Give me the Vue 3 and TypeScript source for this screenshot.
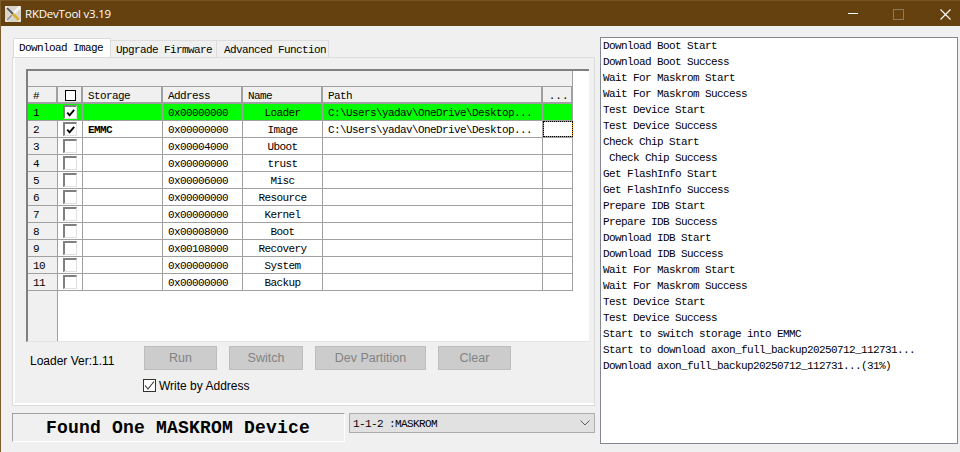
<script setup lang="ts">
interface Row { n: number; on: boolean; storage: string; addr: string; name: string; path: string }
const p = 'C:\\Users\\yadav\\OneDrive\\Desktop...'
const rows: Row[] = [
  { n: 1, on: true, storage: '', addr: '0x00000000', name: 'Loader', path: p },
  { n: 2, on: true, storage: 'EMMC', addr: '0x00000000', name: 'Image', path: p },
  { n: 3, on: false, storage: '', addr: '0x00004000', name: 'Uboot', path: '' },
  { n: 4, on: false, storage: '', addr: '0x00000000', name: 'trust', path: '' },
  { n: 5, on: false, storage: '', addr: '0x00006000', name: 'Misc', path: '' },
  { n: 6, on: false, storage: '', addr: '0x00000000', name: 'Resource', path: '' },
  { n: 7, on: false, storage: '', addr: '0x00000000', name: 'Kernel', path: '' },
  { n: 8, on: false, storage: '', addr: '0x00008000', name: 'Boot', path: '' },
  { n: 9, on: false, storage: '', addr: '0x00108000', name: 'Recovery', path: '' },
  { n: 10, on: false, storage: '', addr: '0x00000000', name: 'System', path: '' },
  { n: 11, on: false, storage: '', addr: '0x00000000', name: 'Backup', path: '' },
]
const log: string[] = [
  'Download Boot Start', 'Download Boot Success', 'Wait For Maskrom Start', 'Wait For Maskrom Success',
  'Test Device Start', 'Test Device Success', 'Check Chip Start', ' Check Chip Success',
  'Get FlashInfo Start', 'Get FlashInfo Success', 'Prepare IDB Start', 'Prepare IDB Success',
  'Download IDB Start', 'Download IDB Success', 'Wait For Maskrom Start', 'Wait For Maskrom Success',
  'Test Device Start', 'Test Device Success', 'Start to switch storage into EMMC',
  'Start to download axon_full_backup20250712_112731...',
  'Download axon_full_backup20250712_112731...(31%)',
]
const buttons = [
  { label: 'Run', w: 73 }, { label: 'Switch', w: 74 }, { label: 'Dev Partition', w: 111 }, { label: 'Clear', w: 73 },
]
</script>

<template>
  <div class="window">
    <header class="titlebar">
      <svg class="appicon" width="16" height="16" viewBox="0 0 16 16">
        <rect width="16" height="16" fill="#d8d4cc" />
        <path d="M1 15 L15 1 M1 1 L15 15" stroke="#f4f4f4" stroke-width="3" />
        <path d="M2 14 L7 9" stroke="#9a9a9a" stroke-width="2" />
        <path d="M2 2 L8 8" stroke="#555" stroke-width="2" />
        <path d="M8 8 L14 14" stroke="#d8b030" stroke-width="3" />
      </svg>
      <span class="title">RKDevTool v3.19</span>
      <span class="min"></span>
      <span class="max"></span>
      <svg class="close" width="11" height="11" viewBox="0 0 11 11">
        <path d="M0.5 0.5 L10.5 10.5 M10.5 0.5 L0.5 10.5" stroke="#fff" stroke-width="1.1" />
      </svg>
    </header>

    <main class="content">
      <section class="left">
        <nav class="tabs">
          <div class="tab active">Download Image</div>
          <div class="tab t2">Upgrade Firmware</div>
          <div class="tab t3">Advanced Function</div>
        </nav>
        <div class="panel">
          <div class="grid">
            <div class="strip"></div>
            <div class="head">
              <div class="h numh">#</div>
              <div class="h chk"><span class="hbox"></span></div>
              <div class="h pad">Storage</div>
              <div class="h pad">Address</div>
              <div class="h pad">Name</div>
              <div class="h pad">Path</div>
              <div class="h dots">. . .</div>
            </div>
            <div class="body">
              <div class="nums">
                <div v-for="r in rows" :key="r.n" class="num" :class="{ green: r.n === 1 }">{{ r.n }}</div>
              </div>
              <div class="cells">
                <div v-for="r in rows" :key="r.n" class="row" :class="{ green: r.n === 1 }">
                  <div class="c chk">
                    <span class="box">
                      <svg v-if="r.on" width="12" height="12" viewBox="0 0 12 12">
                        <path d="M2.5 5.5 L5 8.5 L10 2.5" fill="none" stroke="#000" stroke-width="2" />
                      </svg>
                    </span>
                  </div>
                  <div class="c pad storage">{{ r.storage }}</div>
                  <div class="c pad">{{ r.addr }}</div>
                  <div class="c mid">{{ r.name }}</div>
                  <div class="c pad">{{ r.path }}</div>
                  <div class="c last" :class="{ focus: r.n === 2 }"></div>
                </div>
              </div>
            </div>
          </div>

          <div class="controls">
            <span class="loader">Loader Ver:1.11</span>
            <div class="btns">
              <button v-for="b in buttons" :key="b.label" class="btn" :style="{ width: b.w + 'px' }" disabled>{{ b.label }}</button>
            </div>
          </div>
          <label class="wba">
            <span class="wbox">
              <svg width="11" height="11" viewBox="0 0 11 11">
                <path d="M1 5.5 L4 9 L10 1.5" fill="none" stroke="#333" stroke-width="1.1" />
              </svg>
            </span>
            <span>Write by Address</span>
          </label>
        </div>

        <div class="bottom">
          <div class="status">Found One MASKROM Device</div>
          <div class="combo">
            <span class="ctext">1-1-2 :MASKROM</span>
            <svg width="10" height="6" viewBox="0 0 10 6">
              <path d="M0.5 0.5 L5 5 L9.5 0.5" fill="none" stroke="#606060" stroke-width="1" />
            </svg>
          </div>
        </div>
      </section>

      <section class="log">
        <div v-for="(l, i) in log" :key="i" class="line">{{ l }}</div>
      </section>
    </main>
  </div>
</template>

<style>
html, body { margin: 0; background: #f0f0f0; overflow: hidden; }
</style>

<style scoped>
.window {
  width: 960px;
  height: 452px;
  box-sizing: border-box;
  border-left: 1px solid #7d5c30;
  background: #f0f0f0;
  display: flex;
  flex-direction: column;
  font-family: "Liberation Mono", monospace;
  font-size: 11px;
  letter-spacing: -0.6px;
  color: #000;
  overflow: hidden;
}
.titlebar {
  height: 26px;
  flex: none;
  box-sizing: border-box;
  background: #65410f;
  border-top: 1px solid #755526;
  display: flex;
  align-items: center;
  padding: 0 9px 0 4px;
  color: #fff;
  letter-spacing: 0;
}
.appicon { flex: none; margin-top: 1px; }
.title {
  flex: 1;
  margin-left: 4px;
  margin-bottom: 1px;
  font-family: "Open Sans", sans-serif;
  font-size: 11.5px;
  letter-spacing: -0.22px;
  white-space: nowrap;
}
.min { width: 10px; height: 1px; background: #fff; }
.max { width: 9px; height: 9px; border: 1px solid #8f7a58; margin-left: 35px; margin-top: 1px; }
.close { margin-left: 36px; margin-top: 1px; }

.content { flex: 1; display: flex; min-height: 0; padding-left: 11px; }
.left { width: 583px; flex: none; padding-top: 12px; display: flex; flex-direction: column; }
.tabs { display: flex; align-items: flex-end; height: 19px; margin-left: 1px; }
.tab {
  box-sizing: border-box;
  height: 17px;
  line-height: 18px;
  padding-left: 5px;
  border: 1px solid #dcdcdc;
  border-bottom: none;
  border-left: none;
  background: #f0f0f0;
  white-space: nowrap;
}
.active {
  width: 98px;
  height: 19px;
  line-height: 18px;
  background: #fff;
  border-left: 1px solid #dcdcdc;
}
.t2 { width: 106px; }
.t3 { width: 112px; padding-left: 7px; }
.panel {
  box-sizing: border-box;
  height: 349px;
  padding: 11px 0 0 13px;
  border: 1px solid #dcdcdc;
  box-shadow: inset 2px 0 0 #fff, inset 0 -2px 0 #fff;
  background: #f0f0f0;
}
.grid {
  box-sizing: border-box;
  width: 563px;
  height: 273px;
  border-top: 2px solid #808080;
  border-left: 2px solid #808080;
  border-bottom: 1px solid #e4e4e4;
  background: #fff;
  display: flex;
  flex-direction: column;
}
.strip {
  box-sizing: border-box;
  width: 545px;
  height: 16px;
  flex: none;
  background: #f0f0f0;
  border-right: 1px solid #a0a0a0;
  border-bottom: 1px solid #a0a0a0;
}
.head {
  box-sizing: border-box;
  width: 545px;
  height: 17px;
  flex: none;
  display: grid;
  grid-template-columns: 30px 25px 80px 80px 80px 220px 30px;
  background: #f0f0f0;
  border-bottom: 2px solid #a0a0a0;
}
.h { box-sizing: border-box; border-right: 2px solid #a0a0a0; line-height: 18px; white-space: pre; }
.numh { padding-left: 5px; }
.pad { padding-left: 5px; }
.hbox { display: block; width: 9px; height: 9px; border: 1px solid #000; background: #fff; margin: 3px 0 0 7px; }
.dots { text-align: center; letter-spacing: -3.3px; }
.body { flex: 1; display: flex; min-height: 0; }
.nums { box-sizing: border-box; width: 30px; flex: none; background: #f0f0f0; border-right: 1px solid #a0a0a0; }
.num {
  box-sizing: border-box;
  height: 17px;
  line-height: 18px;
  padding-left: 5px;
  border-bottom: 1px solid #a0a0a0;
}
.num.green { background: #00ff00; }
.cells { flex: none; width: 515px; }
.row {
  height: 17px;
  box-sizing: border-box;
  display: grid;
  grid-template-columns: 25px 80px 80px 80px 220px 30px;
  border-bottom: 1px solid #a0a0a0;
}
.row.green { background: #00ff00; }
.c { box-sizing: border-box; border-right: 1px solid #a0a0a0; line-height: 18px; white-space: pre; overflow: hidden; min-width: 0; }
.mid { text-align: center; }
.storage { font-weight: bold; }
.c.chk { display: flex; justify-content: center; align-items: center; }
.box {
  box-sizing: border-box;
  width: 14px;
  height: 14px;
  background: #fff;
  border-top: 2px solid #808080;
  border-left: 2px solid #808080;
  border-right: 1px solid #e0e0e0;
  border-bottom: 1px solid #e0e0e0;
  display: flex;
  align-items: center;
  justify-content: center;
}
.focus {
  border: 1px dotted #000;
  background: linear-gradient(#fff, #fff) padding-box, #e8870f border-box;
}

.controls { display: flex; margin-top: 4px; height: 24px; }
.loader {
  width: 118px;
  padding-left: 4px;
  box-sizing: border-box;
  font-family: "Liberation Sans", sans-serif;
  font-size: 12px;
  letter-spacing: 0;
  line-height: 30px;
  white-space: nowrap;
}
.btns { display: flex; gap: 12px; }
.btn {
  box-sizing: border-box;
  height: 24px;
  padding: 0;
  background: #cccccc;
  border: 1px solid #bdbdbd;
  color: #838383;
  font-family: "Liberation Sans", sans-serif;
  font-size: 12.5px;
  letter-spacing: 0;
}
.wba {
  display: flex;
  align-items: center;
  gap: 3px;
  margin: 9px 0 0 117px;
  height: 13px;
  font-family: "Liberation Sans", sans-serif;
  font-size: 12px;
  letter-spacing: 0;
}
.wbox {
  box-sizing: border-box;
  width: 13px;
  height: 13px;
  border: 1px solid #333;
  background: #fff;
  display: flex;
  align-items: center;
  justify-content: center;
}
.bottom { display: flex; align-items: flex-start; gap: 4px; margin-top: 7px; }
.status {
  box-sizing: border-box;
  width: 333px;
  height: 29px;
  flex: none;
  border-top: 1px solid #a0a0a0;
  border-left: 1px solid #a0a0a0;
  border-right: 1px solid #fff;
  border-bottom: 1px solid #fff;
  padding-left: 33px;
  font-size: 18px;
  font-weight: bold;
  letter-spacing: 0.2px;
  line-height: 29px;
  white-space: nowrap;
}
.combo {
  box-sizing: border-box;
  width: 246px;
  height: 20px;
  background: #e1e1e1;
  border: 1px solid #adadad;
  display: flex;
  align-items: center;
  justify-content: space-between;
  padding: 0 4px 0 3px;
  white-space: pre;
}
.ctext { padding-top: 1px; }
.log {
  box-sizing: border-box;
  width: 358px;
  height: 407px;
  flex: none;
  margin: 11px 0 0 5px;
  background: #fff;
  border: 1px solid #828790;
  padding: 0 0 0 2px;
}
.line { height: 16px; line-height: 17px; white-space: pre; }
</style>
